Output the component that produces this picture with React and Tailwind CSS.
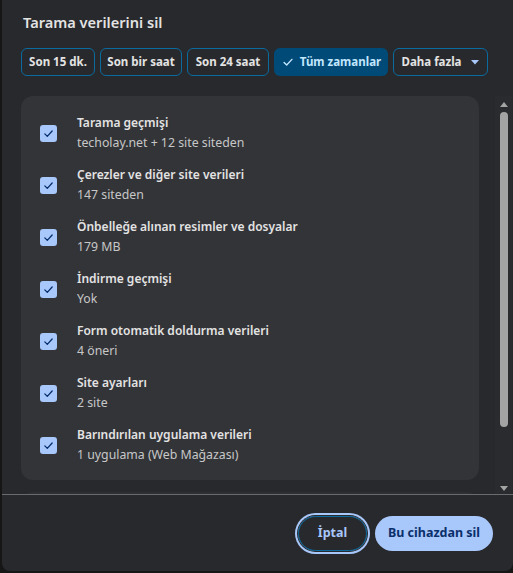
import React from "react";

const rows = [
  { title: "Tarama geçmişi", sub: "techolay.net + 12 site siteden" },
  { title: "Çerezler ve diğer site verileri", sub: "147 siteden" },
  { title: "Önbelleğe alınan resimler ve dosyalar", sub: "179 MB" },
  { title: "İndirme geçmişi", sub: "Yok" },
  { title: "Form otomatik doldurma verileri", sub: "4 öneri" },
  { title: "Site ayarları", sub: "2 site" },
  { title: "Barındırılan uygulama verileri", sub: "1 uygulama (Web Mağazası)" },
];

const ranges = [
  { label: "Son 15 dk.", w: "w-[74px]" },
  { label: "Son bir saat", w: "w-[82px]" },
  { label: "Son 24 saat", w: "w-[82px]" },
];

function Check({ className }) {
  return (
    <svg viewBox="0 0 16 16" className={className} fill="none">
      <path d="M3.5 8.5l3 3 6-6.5" stroke="currentColor" strokeWidth="1.6" strokeLinecap="round" strokeLinejoin="round" />
    </svg>
  );
}

function Row({ title, sub }) {
  return (
    <div className="flex items-center h-[52px]">
      <div className="w-[17px] h-[17px] ml-[19px] rounded-[3px] bg-[#a8c7fa] text-[#062e6f] flex items-center justify-center">
        <Check className="w-[13px] h-[13px]" />
      </div>
      <div className="ml-[20px] leading-[20px] whitespace-nowrap">
        <div className="text-[12px] font-semibold text-[#e3e3e3]">{title}</div>
        <div className="text-[12.3px] text-[#c7c7c7]">{sub}</div>
      </div>
    </div>
  );
}

export default function App() {
  return (
    <div className="w-[513px] h-[573px] bg-[#161616] pl-[2px] pb-[2px] font-['Noto_Sans',sans-serif]">
      <div className="h-full bg-[#28292c] rounded-b-[8px] flex flex-col">
        <h1 className="px-[21px] pt-[12px] h-[48px] text-[14.6px] font-semibold text-[#e3e3e3]">
          Tarama verilerini sil
        </h1>

        {/* time range chips */}
        <div className="flex gap-[5px] px-[19px] h-[28px] whitespace-nowrap">
          {ranges.map((r) => (
            <button
              key={r.label}
              className={`${r.w} rounded-[6px] border border-[#0b6a9e] text-[11.5px] font-bold text-[#e3e3e3]`}
            >
              {r.label}
            </button>
          ))}
          <button className="w-[114px] flex items-center justify-center gap-[5px] rounded-[6px] bg-[#004a77] text-[11.5px] font-bold text-[#c2e7ff]">
            <Check className="w-[14px] h-[14px]" />
            Tüm zamanlar
          </button>
          <button className="w-[95px] flex items-center justify-center gap-[10px] rounded-[6px] border border-[#0b6a9e] text-[11.5px] font-bold text-[#e3e3e3]">
            Daha fazla
            <svg viewBox="0 0 8 5" className="w-[8px] h-[5px] text-[#a8c7fa]">
              <path d="M0 0h8L4 4.5z" fill="currentColor" />
            </svg>
          </button>
        </div>

        {/* scrolling list */}
        <div className="flex mt-[20px] h-[399px] border-b border-[#6a6b6e]">
          <div className="flex-1 pl-[19px] pr-[16px] overflow-hidden">
            <div className="bg-[#333438] rounded-[12px] h-[384px] pt-[11px]">
              {rows.map((r) => (
                <Row key={r.title} {...r} />
              ))}
            </div>
            <div className="bg-[#2e2f33] rounded-t-[12px] h-[20px] mt-[12px]" />
          </div>
          <div className="w-[17px] flex flex-col items-center pt-[6px] pb-[3px] mr-[1px] bg-[#2a2b2e]">
            <svg viewBox="0 0 8 5" className="w-[8px] h-[5px] text-[#a3a3a3]">
              <path d="M0 5h8L4 0z" fill="currentColor" />
            </svg>
            <div className="w-[8px] h-[315px] mt-[5px] rounded-full bg-[#a3a3a3]" />
            <div className="flex-1" />
            <svg viewBox="0 0 8 5" className="w-[8px] h-[5px] text-[#a3a3a3]">
              <path d="M0 0h8L4 5z" fill="currentColor" />
            </svg>
          </div>
        </div>

        {/* footer buttons */}
        <div className="flex justify-end items-center gap-[8px] pr-[20px] pt-[21px]">
          <button className="w-[69px] h-[35px] rounded-full border border-[#0b6a9e] text-[12.5px] font-bold text-[#a8c7fa] ring-2 ring-[#a8c7fa] ring-offset-1 ring-offset-[#28292c]">
            İptal
          </button>
          <button className="w-[118px] h-[35px] rounded-full bg-[#a8c7fa] text-[12.5px] font-bold text-[#0a2f6a]">
            Bu cihazdan sil
          </button>
        </div>
      </div>
    </div>
  );
}
